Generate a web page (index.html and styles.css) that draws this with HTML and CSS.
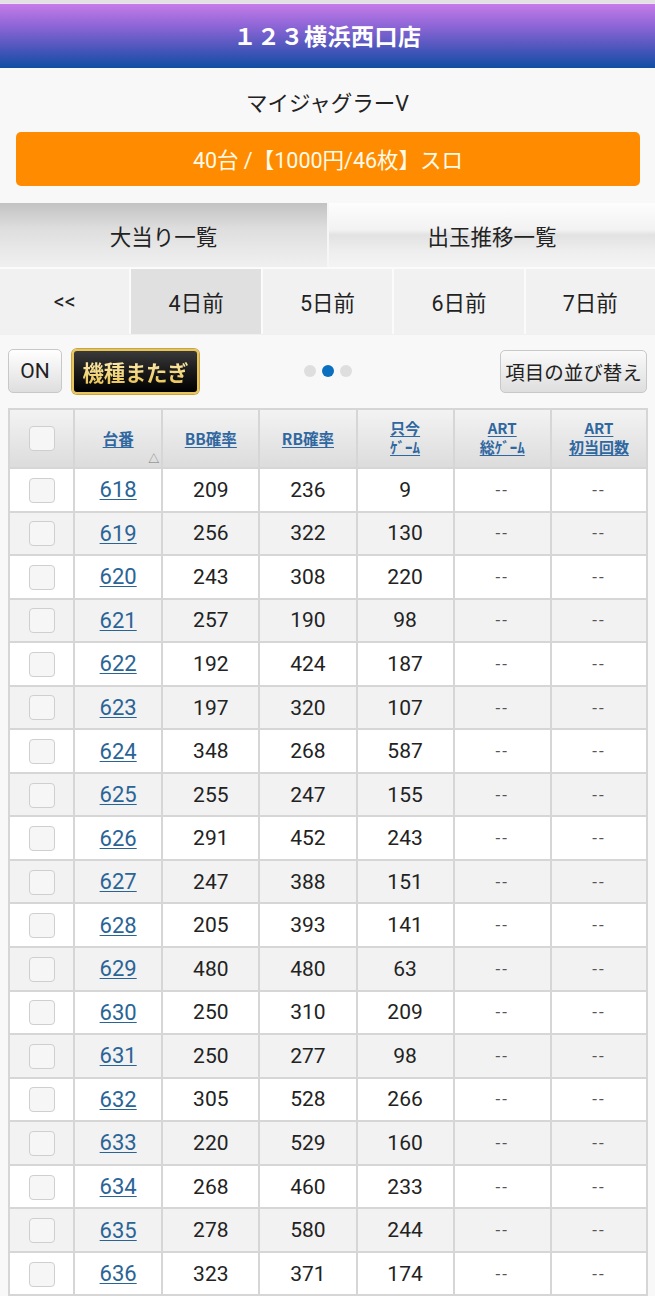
FILE: index.html
```html
<!DOCTYPE html>
<html lang="ja">
<head>
<meta charset="utf-8">
<link rel="stylesheet" href="styles.css">
</head>
<body>
<div class="topstrip"></div>
<header class="hdr">１２３横浜西口店</header>
<div class="machine">マイジャグラーV</div>
<div class="orange-wrap"><div class="orange">40台 /【1000円/46枚】スロ</div></div>
<div class="tabs">
  <div class="tab tab-on">大当り一覧</div>
  <div class="tab tab-off">出玉推移一覧</div>
</div>
<div class="days">
  <div class="day">&lt;&lt;</div>
  <div class="day day-on">4日前</div>
  <div class="day">5日前</div>
  <div class="day">6日前</div>
  <div class="day">7日前</div>
</div>
<div class="controls">
  <div class="ctl-left">
    <div class="btn-on">ON</div>
    <div class="btn-gold"><span>機種またぎ</span></div>
  </div>
  <div class="dots"><i class="dot"></i><i class="dot dot-on"></i><i class="dot"></i></div>
  <div class="ctl-right"><div class="btn-sort">項目の並び替え</div></div>
</div>
<table class="tbl">
  <colgroup>
    <col class="c0"><col class="c1"><col class="c2"><col class="c3"><col class="c4"><col class="c5"><col class="c6">
  </colgroup>
  <thead>
    <tr>
      <th><span class="cb"></span></th>
      <th class="sortcol"><a>台番</a><span class="tri">△</span></th>
      <th><a>BB確率</a></th>
      <th><a>RB確率</a></th>
      <th><span class="two"><a>只今</a><a>ｹﾞｰﾑ</a></span></th>
      <th><span class="two"><a>ART</a><a>総ｹﾞｰﾑ</a></span></th>
      <th><span class="two"><a>ART</a><a>初当回数</a></span></th>
    </tr>
  </thead>
  <tbody>
    <tr><td><span class="cb"></span></td><td><a>618</a></td><td>209</td><td>236</td><td>9</td><td class="dash">--</td><td class="dash">--</td></tr>
    <tr><td><span class="cb"></span></td><td><a>619</a></td><td>256</td><td>322</td><td>130</td><td class="dash">--</td><td class="dash">--</td></tr>
    <tr><td><span class="cb"></span></td><td><a>620</a></td><td>243</td><td>308</td><td>220</td><td class="dash">--</td><td class="dash">--</td></tr>
    <tr><td><span class="cb"></span></td><td><a>621</a></td><td>257</td><td>190</td><td>98</td><td class="dash">--</td><td class="dash">--</td></tr>
    <tr><td><span class="cb"></span></td><td><a>622</a></td><td>192</td><td>424</td><td>187</td><td class="dash">--</td><td class="dash">--</td></tr>
    <tr><td><span class="cb"></span></td><td><a>623</a></td><td>197</td><td>320</td><td>107</td><td class="dash">--</td><td class="dash">--</td></tr>
    <tr><td><span class="cb"></span></td><td><a>624</a></td><td>348</td><td>268</td><td>587</td><td class="dash">--</td><td class="dash">--</td></tr>
    <tr><td><span class="cb"></span></td><td><a>625</a></td><td>255</td><td>247</td><td>155</td><td class="dash">--</td><td class="dash">--</td></tr>
    <tr><td><span class="cb"></span></td><td><a>626</a></td><td>291</td><td>452</td><td>243</td><td class="dash">--</td><td class="dash">--</td></tr>
    <tr><td><span class="cb"></span></td><td><a>627</a></td><td>247</td><td>388</td><td>151</td><td class="dash">--</td><td class="dash">--</td></tr>
    <tr><td><span class="cb"></span></td><td><a>628</a></td><td>205</td><td>393</td><td>141</td><td class="dash">--</td><td class="dash">--</td></tr>
    <tr><td><span class="cb"></span></td><td><a>629</a></td><td>480</td><td>480</td><td>63</td><td class="dash">--</td><td class="dash">--</td></tr>
    <tr><td><span class="cb"></span></td><td><a>630</a></td><td>250</td><td>310</td><td>209</td><td class="dash">--</td><td class="dash">--</td></tr>
    <tr><td><span class="cb"></span></td><td><a>631</a></td><td>250</td><td>277</td><td>98</td><td class="dash">--</td><td class="dash">--</td></tr>
    <tr><td><span class="cb"></span></td><td><a>632</a></td><td>305</td><td>528</td><td>266</td><td class="dash">--</td><td class="dash">--</td></tr>
    <tr><td><span class="cb"></span></td><td><a>633</a></td><td>220</td><td>529</td><td>160</td><td class="dash">--</td><td class="dash">--</td></tr>
    <tr><td><span class="cb"></span></td><td><a>634</a></td><td>268</td><td>460</td><td>233</td><td class="dash">--</td><td class="dash">--</td></tr>
    <tr><td><span class="cb"></span></td><td><a>635</a></td><td>278</td><td>580</td><td>244</td><td class="dash">--</td><td class="dash">--</td></tr>
    <tr><td><span class="cb"></span></td><td><a>636</a></td><td>323</td><td>371</td><td>174</td><td class="dash">--</td><td class="dash">--</td></tr>
  </tbody>
</table>
</body>
</html>
```
FILE: styles.css
```css
* { box-sizing: border-box; }
html, body { margin: 0; padding: 0; }
body {
  background: #f8f8f8;
  font-family: Roboto, "Noto Sans CJK JP", sans-serif;
  color: #222;
  width: 655px;
  overflow: hidden;
}
.topstrip { height: 4px; background: #e2e2e2; border-bottom: 1px solid #ede0f2; }
.hdr {
  height: 64px;
  background: linear-gradient(#c67be8 0%, #8c65d6 35%, #4a56bb 70%, #0f4ea2 100%);
  color: #fff;
  font-family: "Noto Sans CJK JP", sans-serif;
  font-weight: 700;
  font-size: 23px;
  display: flex;
  align-items: center;
  justify-content: center;
  letter-spacing: 0.5px;
  padding-bottom: 2px;
}
.machine {
  height: 64px;
  display: flex;
  align-items: center;
  justify-content: center;
  font-size: 21.5px;
  color: #222;
  padding-top: 2px;
}
.orange-wrap { padding: 0 15px 0 16px; height: 71px; }
.orange {
  height: 54px;
  background: #ff8c00;
  border-radius: 5px;
  color: #fffbe8;
  font-size: 21.5px;
  display: flex;
  align-items: center;
  justify-content: center;
  padding-bottom: 2px;
}
.tabs { display: flex; height: 66px; border-bottom: 2px solid #fbfbfb; }
.tab {
  flex: 1;
  display: flex;
  align-items: center;
  justify-content: center;
  font-size: 21.5px;
  color: #222;
}
.tab-on {
  background: linear-gradient(#c2c2c2 0%, #dedede 40%, #f0f0f0 100%);
  border-right: 2px solid #f6f6f6;
  flex: 0 0 329px;
}
.tab-off {
  background: linear-gradient(#fdfdfd 0%, #f2f2f2 42%, #e2e2e2 50%, #eeeeee 75%, #f4f4f4 100%);
}
.days { display: flex; height: 66px; border-bottom: 1px solid #f0f0f0; }
.day {
  flex: 1;
  display: flex;
  align-items: center;
  justify-content: center;
  background: #f1f1f1;
  border-left: 2px solid #fbfbfb;
  font-size: 21.5px;
  color: #222;
}
.day:first-child { border-left: none; }
.day-on { background: #e0e0e0; }
.controls {
  height: 73px;
  display: grid;
  grid-template-columns: 1fr auto 1fr;
  align-items: center;
  padding: 0 8px 1px 8px;
}
.ctl-left { display: flex; align-items: center; gap: 10px; }
.ctl-right { display: flex; justify-content: flex-end; }
.btn-on {
  width: 54px;
  height: 44px;
  border: 1px solid #c8c8c8;
  border-radius: 5px;
  background: linear-gradient(#ffffff, #dedede);
  display: flex;
  align-items: center;
  justify-content: center;
  font-size: 21px;
  color: #222;
}
.btn-gold {
  width: 127px;
  height: 45px;
  border: 2px solid #e6c65c;
  border-radius: 5px;
  background: linear-gradient(#3a3a3a 0%, #1a1a1a 50%, #000 100%);
  box-shadow: 0 0 0 1px #c9a444;
  display: flex;
  align-items: center;
  justify-content: center;
}
.btn-gold span {
  font-family: "Noto Sans CJK JP", sans-serif;
  font-weight: 700;
  font-size: 21.5px;
  color: #f3d98a;
  background: linear-gradient(#fff3c0, #e8c04e);
  -webkit-background-clip: text;
  background-clip: text;
  -webkit-text-fill-color: transparent;
  letter-spacing: -0.3px;
  white-space: nowrap;
}
.dots { display: flex; justify-content: center; gap: 6px; }
.dot { width: 12px; height: 12px; border-radius: 50%; background: #dedede; display: block; }
.dot-on { background: #0b6fc0; }
.btn-sort {
  width: 147px;
  height: 43px;
  border: 1px solid #c8c8c8;
  border-radius: 5px;
  background: linear-gradient(#fafafa, #dedede);
  display: flex;
  align-items: center;
  justify-content: center;
  font-size: 19.5px;
  white-space: nowrap;
  color: #222;
}
.tbl {
  margin-left: 8px;
  width: 640px;
  border-collapse: collapse;
  table-layout: fixed;
  background: #fff;
}
.c0 { width: 65px; }
.c1 { width: 88px; }
.c2, .c3, .c4, .c5 { width: 97px; }
.c6 { width: 96px; }
.tbl th, .tbl td { border: 2px solid #d6d6d6; text-align: center; padding: 0; }
.tbl th {
  height: 59px;
  background: linear-gradient(#f3f3f3, #dcdcdc);
  font-family: "Noto Sans CJK JP", sans-serif;
  font-size: 15.5px;
  font-weight: 700;
  line-height: 19px;
}
.tbl th a { color: #2f67a0; text-decoration: underline; text-underline-offset: 2px; }
.tbl th .two { display: flex; flex-direction: column; align-items: center; gap: 0; position: relative; top: -2px; }
.tbl th .two a { display: block; height: 19px; line-height: 19px; font-size: 15px; }
.tbl th.sortcol { position: relative; }
.tri {
  position: absolute;
  right: 2px;
  bottom: -1px;
  font-size: 11px;
  font-weight: 400;
  color: #777;
}
.tbl td {
  height: 43.56px;
  font-size: 21px;
  color: #222;
}
.tbl tbody tr:nth-child(even) td { background: #f2f2f2; }
.tbl td a { color: #2a6496; text-decoration: underline; text-underline-offset: 2px; text-decoration-thickness: 1px; font-size: 22px; }
.tbl td.dash { font-size: 17px; color: #555; letter-spacing: 2px; }
.cb {
  display: inline-block;
  width: 26px;
  height: 25px;
  border: 1px solid #cfcfcf;
  border-radius: 4px;
  background: #f6f6f6;
  vertical-align: middle;
}
```
